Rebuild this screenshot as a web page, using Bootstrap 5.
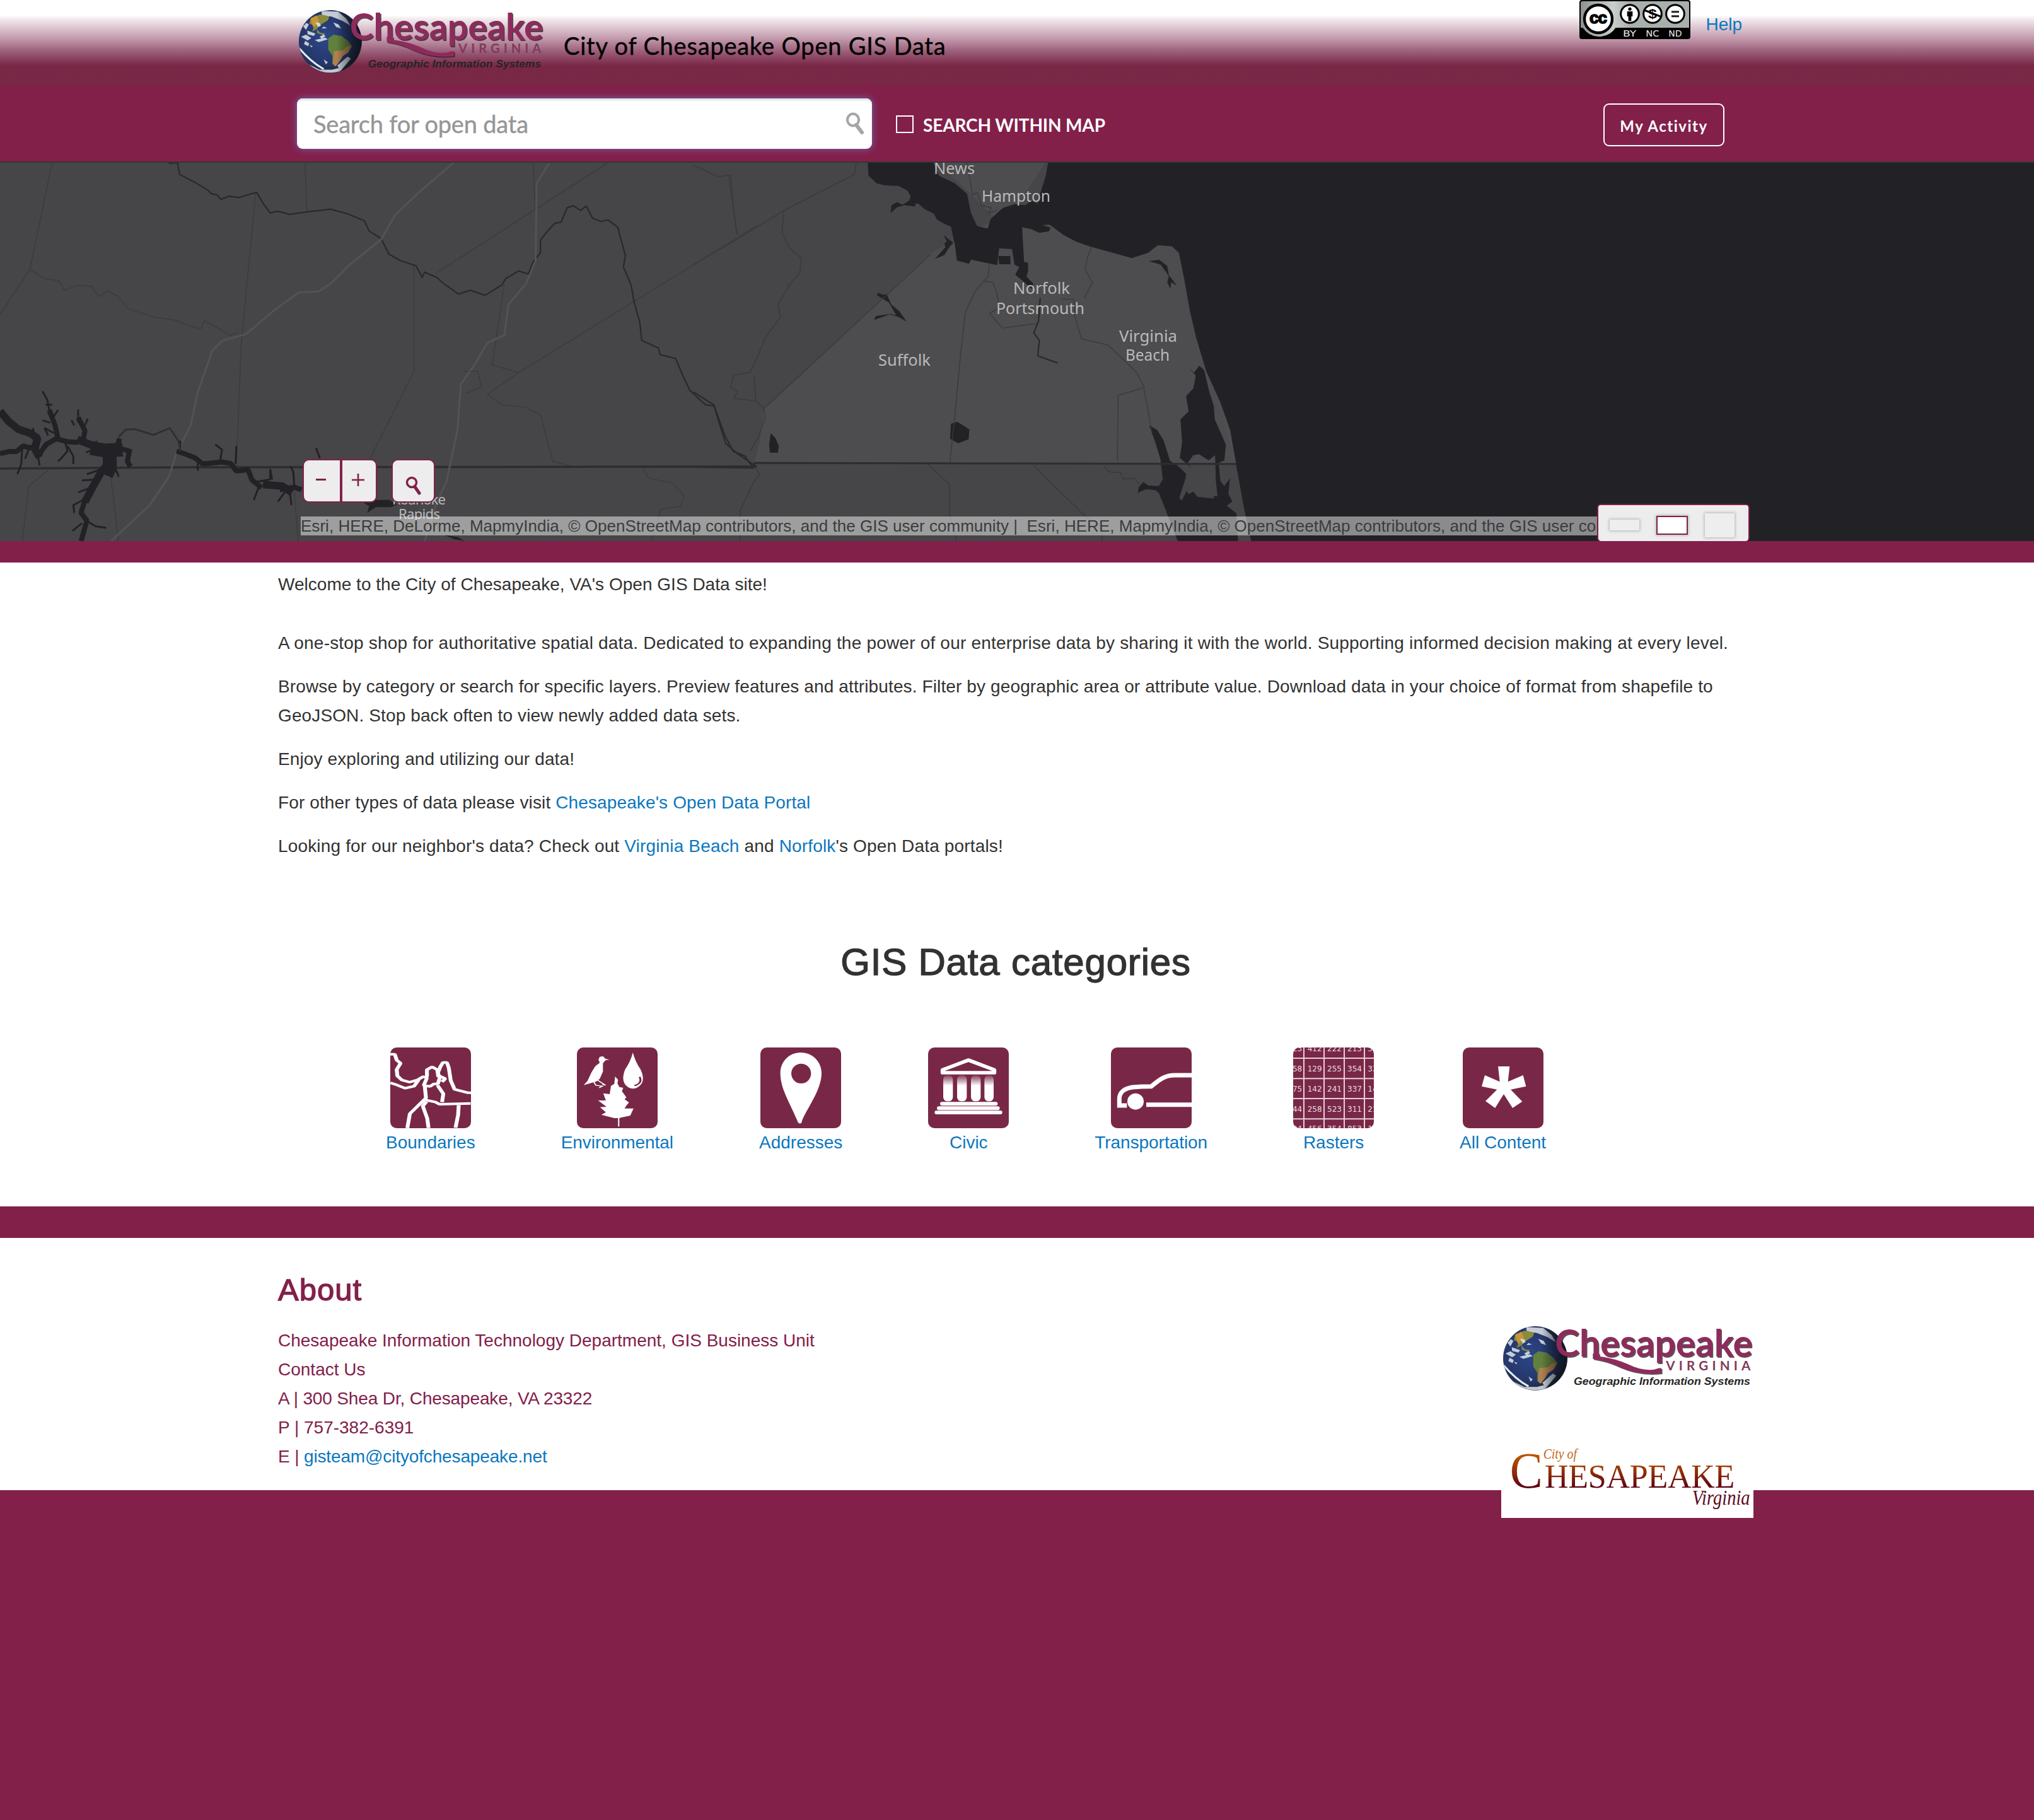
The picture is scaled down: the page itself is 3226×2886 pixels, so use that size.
<!DOCTYPE html>
<html lang="en">
<head>
<meta charset="utf-8">
<title>City of Chesapeake Open GIS Data</title>
<link href="https://cdn.jsdelivr.net/npm/bootstrap@5.3.0/dist/css/bootstrap.min.css" rel="stylesheet">
<style>
:root{--brand:#82204a;--plum:#782846;--ink:#323232;--sky:#0c77be}
body{min-height:2886px;font-family:"Liberation Sans",Arial,sans-serif;font-size:28px;line-height:46px;color:var(--ink);background:var(--brand)}
a{color:var(--sky);text-decoration:none}
p{margin-bottom:23px}
.page-wrap{width:2344px;margin:0 auto}
.site-top{height:136px;background:linear-gradient(#fff 0,#fff 24px,#f1e8ec 31px,#c49cae 60px,#9a5e79 82px,#7a2746 104px,#782846 136px)}
.top-inner{padding:0 22px 0 30px}
.site-logo{width:392px;height:101px;margin-top:16px}
.site-title{font-family:Lato,sans-serif;font-size:38px;line-height:48px;letter-spacing:.8px;color:#000;margin:48px 0 0 31px;-webkit-text-stroke:.4px}
.cc-badge{width:176px;height:62px}
.help-link{margin:16px 0 0 24px}
.search-bar{height:120px;padding:0 50px 0 30px}
.search-box{width:912px;height:80px;border-radius:9px;padding:0 12px 0 26px;background:#fff;box-shadow:0 0 12px #7366b0,inset 0 3px 3px #dfe3e3;font-family:Lato,sans-serif;font-size:38px;letter-spacing:-.2px;color:#969696;-webkit-text-stroke:.4px}
.tick{width:28px;height:28px;border:2px solid #fff;margin:2px 15px 0 38px}
.within{font-family:Lato,sans-serif;font-weight:700;font-size:28px;letter-spacing:-.15px;color:#fff;padding-top:3px}
.btn-act{font-family:Lato,sans-serif;font-weight:700;font-size:24px;letter-spacing:1.5px;width:192px;height:68px;border:2px solid #fff;border-radius:9px;color:#fff;padding:3px 0 0;margin-top:4px}
.map-pane{height:602px;background:#464648;border-top:2px solid #3a3338}
.map-pane>svg{position:absolute;left:0;top:-2px}
.ctl{position:absolute;top:470px;height:69px;background:#ededed;border:2px solid var(--brand);border-radius:10px;color:var(--brand)}
.ctl-zoom{left:480px;width:118px}
.ctl-zoom span{width:50%;padding-right:3px;padding-bottom:4px}
.ctl-zoom span+span{border-left:4px solid var(--brand)}
.ctl-find{left:621px;width:69px}
.credits{position:absolute;left:477px;top:561px;width:2060px;height:30px;line-height:31px;overflow:hidden;white-space:pre;background:rgba(255,255,255,.48);color:#3b3b3d;font-size:26px;letter-spacing:.03px}
.size-pick{position:absolute;left:2533px;top:541px;width:242px;height:60px;padding:6px 4px 0 0;gap:27px;background:#ededed;border:2px solid var(--brand);border-bottom-width:1px;border-radius:6px}
.size-pick i{display:block;box-shadow:0 0 4px 1px #b4b4b4;background:#eee;width:47px}
.size-pick .wide{height:17px}.size-pick .tall{height:38px}
.size-pick .picked{height:30px;width:50px;background:#fff;border:2px solid var(--brand)}
.band{height:34px}
.intro{padding-top:12px}
.intro p{letter-spacing:.12px}
.intro .opening{letter-spacing:.02px;margin-bottom:47px}
.intro .airy{letter-spacing:.2px}
.intro .near{letter-spacing:.16px}
.cat-title{font-size:60px;line-height:72px;font-weight:400;letter-spacing:.8px;-webkit-text-stroke:1.3px;margin:125px 0 99px;padding-right:4px;text-align:center}
.cats{padding-left:171px;gap:136px;padding-bottom:78px}
.cats a{min-width:128px;text-align:center;white-space:nowrap}
.cats a.snug{letter-spacing:-.05px}
.cats svg{display:block;margin:0 auto;width:128px;height:128px;border-radius:10px;background:var(--plum)}
.gap-band{height:50px}
.foot{height:400px;color:var(--brand)}
.about-title{font-size:49px;line-height:56px;letter-spacing:1px;-webkit-text-stroke:1.3px;margin:54px 0 30px}
.tight{letter-spacing:-.14px}
.foot-logos{width:400px;margin:140px 4px 0 0}
.foot-logos svg{display:block}
.city-logo{margin-top:75px;background:#fff}
</style>
<script src="https://cdn.jsdelivr.net/npm/bootstrap@5.3.0/dist/js/bootstrap.bundle.min.js"></script>
</head>
<body>
<svg width="0" height="0" class="position-absolute">
<defs>
<radialGradient id="sea" cx=".42" cy=".45" r=".58"><stop offset="0" stop-color="#2c4688"/><stop offset=".7" stop-color="#25376a"/><stop offset="1" stop-color="#1b2535"/></radialGradient>
<linearGradient id="shade"><stop offset=".6" stop-opacity="0"/><stop offset="1" stop-color="#10141c" stop-opacity=".85"/></linearGradient>
<linearGradient id="rust" x1="0" y1="70" x2="0" y2="235" gradientUnits="userSpaceOnUse"><stop offset="0" stop-color="#c05a00"/><stop offset=".5" stop-color="#963206"/><stop offset="1" stop-color="#5c0012"/></linearGradient>
<clipPath id="ball"><circle cx="162" cy="153" r="152"/></clipPath>
<filter id="soft"><feGaussianBlur stdDeviation="2"/></filter>
<symbol id="gis-logo" viewBox="0 0 1200 310" preserveAspectRatio="none">
<circle cx="162" cy="153" r="153" fill="url(#sea)"/>
<g clip-path="url(#ball)"><g filter="url(#soft)">
<path d="M66 42L110 22 160 24 150 50 118 70 96 92 74 104 84 76 60 66Z" fill="#8b8a3c"/><path d="M66 40l30-14 12 30-28 30z" fill="#c99537"/><path d="M96 92l16 18 26 4-10 8-30-10z" fill="#7d8a4a"/>
<path d="M152 138L176 120 216 126 246 148 268 176 250 204 222 222 208 248 186 274 172 262 172 222 152 192Z" fill="#62803e"/><path d="M180 200l44-4 22-22 18 2-14 30-28 18-14 24-20 26-14-12z" fill="#b08050"/>
<path d="M30 80l16-18 12 8-14 26zM20 130l24-10 26 16-18 12zM50 100l40 14-8 12-30-8zM86 146l50-12 14 8-44 14zM120 4l80 4 40 34 20 34-40-24-50-20-50-10zM110 130l20-12 8 10-18 12zM0 200l50 60 60 30 60 0 40-10 0 40-110 0-90-50zM196 270l50-44 16 10-50 60zM130 240l20 14-10 10zM60 170l16 4-4 8zM120 90l10-10 16 8zM40 150l20 12-6 14-20-10zM90 60l20 2 6 14-14 6zM176 60l26 10 12 20-24-8z" fill="#dfe5ea" opacity=".85"/>
<path d="M10 185q60 70 120 102" stroke="#e8eef2" stroke-width="9" fill="none"/></g>
<circle cx="162" cy="153" r="153" fill="url(#shade)"/></g>
<g font-family="Lato,sans-serif">
<g fill="#2a1a22" opacity=".75" transform="translate(5 5)"><text x="256" y="145" font-size="178" font-weight="700" textLength="940" lengthAdjust="spacingAndGlyphs">Chesapeake</text><path d="M436 130v26q70 10 130 40 90 40 196 28v-24h-12q-60 24-150-20-60-26-134-36v-14z"/></g>
<text x="256" y="145" font-size="178" font-weight="700" fill="#8d2c5c" textLength="940" lengthAdjust="spacingAndGlyphs">Chesapeake</text>
<path d="M436 130v26q70 10 130 40 90 40 196 28v-24h-12q-60 24-150-20-60-26-134-36v-14z" fill="#8d2c5c"/>
<text x="784" y="210" font-size="62" font-weight="700" fill="#7f3a58" textLength="402" lengthAdjust="spacing">VIRGINIA</text></g>
<text x="345" y="280" font-family="Liberation Sans,sans-serif" font-size="52" font-weight="700" font-style="italic" fill="#252525" textLength="840" lengthAdjust="spacingAndGlyphs">Geographic Information Systems</text>
</symbol>
</defs>
</svg>

<header class="site-top">
<div class="page-wrap top-inner d-flex align-items-start">
<svg class="site-logo"><use href="#gis-logo"/></svg>
<div class="site-title">City of Chesapeake Open GIS Data</div>
<svg class="cc-badge ms-auto" viewBox="0 0 528 186">
<defs><linearGradient id="cg"><stop offset="0" stop-color="#8d928e"/><stop offset=".3" stop-color="#c9cfcb"/><stop offset=".45" stop-color="#a9afab"/><stop offset="1" stop-color="#a9b0ab"/></linearGradient></defs>
<rect width="528" height="186" rx="12" fill="#000"/><path d="M6 14q0-8 10-8h496q10 0 10 8v118H172q-26 42-82 42-46-2-74-42H6z" fill="url(#cg)"/>
<circle cx="90" cy="90" r="66" fill="#fff" stroke="#000" stroke-width="13"/>
<g stroke="#000" stroke-width="9" fill="#fff"><circle cx="240" cy="66" r="43"/><circle cx="348" cy="66" r="43"/><circle cx="456" cy="66" r="43"/></g>
<text x="48" y="110" font-family="Liberation Sans" font-size="78" font-weight="700" textLength="84" stroke="#000" stroke-width="5">cc</text>
<circle cx="240" cy="43" r="8"/><path d="M227 54h26v24h-6v22h-14V78h-6z"/>
<text x="327" y="88" font-family="Liberation Sans" font-size="62" font-weight="700" textLength="42" lengthAdjust="spacingAndGlyphs">$</text><path d="M308 48L390 80" stroke="#000" stroke-width="9"/>
<path d="M438 56h36M438 77h36" stroke="#222" stroke-width="9"/>
<g fill="#e8e8e8" font-family="DejaVu Sans" font-size="40"><text x="207" y="174" textLength="64" lengthAdjust="spacingAndGlyphs">BY</text><text x="316" y="174" textLength="64" lengthAdjust="spacingAndGlyphs">NC</text><text x="424" y="174" textLength="64" lengthAdjust="spacingAndGlyphs">ND</text></g>
</svg>
<a href="#" class="help-link">Help</a>
</div>
</header>

<div class="page-wrap search-bar d-flex align-items-center">
<div class="search-box d-flex align-items-center justify-content-between"><span>Search for open data</span>
<svg width="30" height="36" viewBox="0 0 30 36" fill="none" stroke="#a6a6a6"><ellipse cx="12" cy="12" rx="9" ry="9.5" stroke-width="4"/><path d="M17 20l9 12" stroke-width="6" stroke-linecap="round"/></svg></div>
<div class="tick"></div><div class="within">SEARCH WITHIN MAP</div>
<button class="btn btn-act ms-auto">My Activity</button>
</div>

<main>
<section class="map-pane position-relative overflow-hidden">
<svg width="3226" height="602" viewBox="0 0 3226 602" fill="none">
<g transform="translate(1100 -6) scale(.63776 .40816)">
<path fill="#49494b" d="M-80 920L0 915 140 1170 150 1188H1350V0H0Z" opacity=".25"/>
<path fill="#4d4d4f" d="M175 975L590 370 800 200 882 0H595L760 250 1250 300 1400 1188H150L165 1100Z"/>
<path fill="#222226" d="M433 15L435 70 455 100 475 107 510 110 532 128 540 150 536 168 560 180 575 200 598 218 605 240 625 258 640 268 650 340 655 400 685 412 690 396 755 418 760 352 792 355 798 415 810 425 800 455 818 478 842 510 845 490 828 462 832 440 832 408 822 405 817 270 840 278 860 292 884 286 888 272 868 262 885 260 920 300 950 325 985 345 1090 390 1130 370 1155 340 1190 345 1207 370 1220 470 1235 600 1250 700 1275 830 1310 950 1335 1060 1350 1200 1370 1370 1388 1500H3400V15H882L876 70 862 140 856 178 840 168 825 185 800 180 770 195 755 215 738 240 732 275 720 272 705 265 690 215 680 140 650 100 610 70 595 15Z"/>
<path fill="#222226" d="M490 215l2-30 14-12 14 10 18-18 16 10-4 14 -26-4-18 8zM622 300l10 14 14 16-10 18-12 30-24 16 8-14 18-32-2-16 6-6zM758 382h30v32h-28zM1132 402l26-5 20 24 4 35 20 42-14-14-2 26-8-26 4-24-20-44zM458 525l14 8 8-4 12 42 20 26 18 40-20-18-22-10-40 22 6-16 36-8 14 6-18-50-30-28zM192 1070l12 20 8 30-2 26-20 0-2-30zM640 1034l16-8 30 30-2 38-26 16-20-18z"/>
<path fill="#222226" d="M1236 822l8 14 14-28 12 18 12 80 12 60 2 50 14 50 14 50-4 60-14 10 4 70 10 20 14-30-4 60 10 30-14 16 24 30 4 110H1205l-16-60-14-60-18-70-8-10-24-4-20 14 2-22 12-20 12 14 26 2 10-26-6-80-14-70-14-60 20 18 16 40 16 80 20 20 20 30-4 50 10 30 18-16 10 14 44 10-4-60-2-100-16 20-24-24-14 4-14 30 10 20-30-40 6-60-4-90 20-30-6-60 18-30 6-50-12-20z"/>
<path fill="#464648" d="M1255 1200l35-6 4 130-40-6-22-40-18 54-6-10 14-70z"/>
<path d="M1307 960l14 60 16 90 10 80" stroke="#505052" stroke-width="3" vector-effect="non-scaling-stroke"/>
<g stroke="#38383b" stroke-width="1.6" opacity=".8">
<path vector-effect="non-scaling-stroke" d="M0 415L110 315 225 205 400 65 405 15"/>
<path vector-effect="non-scaling-stroke" d="M0 30L30 50 60 74 92 68 98 180 108 300M225 205L220 290 238 350 268 390 264 450 240 490 210 570 216 620 178 700 160 770 140 835 100 845 92 890 110 910 100 935 155 945 150 845M155 945L175 975 178 1010 160 1090 140 1140"/>
<path vector-effect="non-scaling-stroke" d="M175 975L590 375M735 415L733 460 700 520 676 600 665 750 648 1030 637 1188M720 480l24 4 10 40 6 60-24 20 32 58 88-18M990 345l-10 40-6 50 18 50-20 60M945 600l20 104 66 24 70 105 20 60-65 30-2 255M1120 900l10 80 10 90M915 550h30l4 50M680 15l14 130 12-10 10 50 24 10-6 20 20-10"/>
<path vector-effect="non-scaling-stroke" d="M582 1190l55 80v120l20 110M845 1195L975 1395 1016 1430V1500M1022 1200l10 20 30 4 6 24 28-2 14 24M116 1500V1370l34-110 14-30-16-40"/>
</g>
<path vector-effect="non-scaling-stroke" d="M0 1202L148 1205 152 1186 1350 1190" stroke="#2d2d30" stroke-width="3"/>
<path vector-effect="non-scaling-stroke" d="M862 545l-4 90-12 45 14 30-4 60 50 28M0 910l20 20 30 30 14 60 14 60 20 60 30 20 8 20 14 25" stroke="#29292c" stroke-width="2.2"/>
</g>
<g transform="translate(0 -6) scale(.76531 .40816)">
<g stroke="#3a3a3d" stroke-width="1.6" opacity=".8">
<path vector-effect="non-scaling-stroke" d="M108 20L62 435 0 610M62 435l30 35 30 8 12 38 24-20 32 4 14 40 18-22 20 18 24 50 30 20 24 14 40 10 40 28 16 6 8-30 30 30 22 26 18-10M530 135L500 720 490 1200M632 20l4 186M858 420v410l-94 350M1105 20l4 180M1258 22L903 450M1568 265L1075 835 1020 805 1045 490M1075 835l-65 85 30 40 50 10 30 30 16 110 10 70 40 20M1510 70l18 230M960 830l30 0 8 60-30 25M228 1215l18 275M100 1215l-40 60-14 215M606 1210l12 280M1330 1195l14 50 50 20 24 50-8 40-40 10-20 125"/></g>
<path vector-effect="non-scaling-stroke" d="M350 22L368 20 372 65 405 97 430 125 438 140 450 145 458 162 475 150 495 155 512 145 532 135 546 180 560 215 575 208 600 220 640 210 685 200 720 218 755 245 765 285 790 315 806 375 830 400 862 420 875 465 880 445 905 465 920 490 950 530 975 515 1005 535 1040 495 1048 470 1075 440 1095 452 1105 405 1120 370 1120 320 1135 285 1150 255 1163 250 1175 195 1188 187 1203 205 1215 188 1228 235 1245 248 1260 242 1280 270 1296 380 1292 425 1308 495 1314 560 1326 640 1330 710 1365 740 1368 765 1400 780 1416 850 1430 905 1462 960 1480 965 1492 1040 1504 1110 1528 1150 1568 1200" stroke="#29292c" stroke-width="2.2"/>
<path vector-effect="non-scaling-stroke" d="M0 1208L400 1203 1568 1200" stroke="#2d2d30" stroke-width="3.5"/>
<g stroke="#535355" stroke-width="3">
<path vector-effect="non-scaling-stroke" d="M940 20L865 140 818 225 790 318 725 415 685 490 660 520 620 523 570 590 510 685 460 712 440 750 410 910 395 1040 365 1150 350 1240 310 1350 230 1490M1138 22L1112 100 1110 400 1090 490 1054 570 1045 690 1010 720 985 800 955 880 948 1060 925 1260 905 1340 880 1490"/></g>
<g stroke="#222226" stroke-linejoin="bevel">
<path vector-effect="non-scaling-stroke" stroke-width="12" d="M0 985L18 1025 38 1055 62 1070 78 1090 72 1130 82 1165M160 1095l30 22 30 30 4 40-16 40-18 60-14 50M545 1270l40 6 20 25"/>
<path vector-effect="non-scaling-stroke" stroke-width="22" d="M188 1128l30 10 36-4M226 1120l2 80-8 34"/>
<path vector-effect="non-scaling-stroke" stroke-width="8" d="M0 1150l18-8 16 0 14-22 14 8 18-14M82 1150l14-36 20-22 24 12 22 2M176 1330l-8 50 12 30-12 80M242 1125l6-34M250 1130l18 10-4 40 6 20M120 1090l-6-50-12-60M172 1100l4-40-14-50M366 1140l16 10 22 16 16 24 40-8 18 6 12 30 24-6 8 40 20 30M555 1270l16 6M580 1290l30-10 15 10"/>
<path vector-effect="non-scaling-stroke" stroke-width="3" d="M102 980l-4-40-10-32M94 960l14 0M110 1010l10-30M104 1030l-16-10M162 1030l0-52M154 1040l-6-20M176 1040l6-26M100 1080l-8-30M72 1080l-4-30M112 1070l-20-20M78 1150l4 46M46 1130l-2 60-8 40M60 1130l-8 40M134 1100l6 40-14 30 -6 10M140 1120l12 40 0 30M200 1100l-4 30-18 16M260 1140l14-4M262 1180l10 16M236 1190l10 50M210 1210l-30 20M200 1250l-30 4M192 1280l-30 20M182 1320l-30 30 2 30M178 1410l20 22 22 6M170 1420l-20 30M372 1150l2-50M456 1184l4-50-14-20M488 1190l2-70M530 1260l30-10 0-40M610 1280l-2-60-6-20M536 1280l-10 50M600 1290l4 60M590 1300l-14 36M560 1210l4 40M410 1180l0 36M655 1128l8 40"/></g>
<path stroke="#303034" stroke-width="3" vector-effect="non-scaling-stroke" d="M246 1085l14-28 20-2 38 22 34-26 18 50 4 40"/>
<path fill="#222226" d="M745 1330h62l16 18-14 10-30 0-18 22 4-26zM920 1465l30 10 12 14-20-6z"/>
</g>
<g fill="#b9b9ba" font-family="Noto Sans,Open Sans,sans-serif" font-size="26">
<text x="1481" y="20" textLength="65" lengthAdjust="spacingAndGlyphs">News</text><text x="1557" y="64" textLength="109" lengthAdjust="spacingAndGlyphs">Hampton</text><text x="1607" y="210" textLength="90" lengthAdjust="spacingAndGlyphs">Norfolk</text><text x="1580" y="242" textLength="140" lengthAdjust="spacingAndGlyphs">Portsmouth</text><text x="1775" y="286" textLength="92" lengthAdjust="spacingAndGlyphs">Virginia</text><text x="1785" y="316" textLength="70" lengthAdjust="spacingAndGlyphs">Beach</text><text x="1393" y="324" textLength="83" lengthAdjust="spacingAndGlyphs">Suffolk</text>
<g font-size="22"><text x="622" y="544" textLength="85">Roanoke</text><text x="632" y="567" textLength="66">Rapids</text></g></g>
</svg>
<div class="ctl ctl-zoom d-flex"><span class="d-flex align-items-center justify-content-center"><svg width="16" height="4"><rect width="16" height="3" fill="#82204a"/></svg></span><span class="d-flex align-items-center justify-content-center"><svg width="20" height="20" stroke="#82204a" stroke-width="2.6"><path d="M10 0v20M0 10h20"/></svg></span></div>
<div class="ctl ctl-find d-flex justify-content-center"><svg class="mt-4" width="26" height="32" fill="none" stroke="#82204a"><circle cx="10" cy="11" r="7.5" stroke-width="3.4"/><path d="M15 18l7 10" stroke-width="5" stroke-linecap="round"/></svg></div>
<div class="credits">Esri, HERE, DeLorme, MapmyIndia, © OpenStreetMap contributors, and the GIS user community |&nbsp; Esri, HERE, MapmyIndia, © OpenStreetMap contributors, and the GIS user community</div>
<div class="size-pick d-flex align-items-center justify-content-center"><i class="wide"></i><i class="picked"></i><i class="tall"></i></div>
</section>
<div class="band"></div>

<section class="bg-white">
<div class="page-wrap intro">
<p class="opening">Welcome to the City of Chesapeake, VA's Open GIS Data site!</p>
<p class="airy">A one-stop shop for authoritative spatial data. Dedicated to expanding the power of our enterprise data by sharing it with the world. Supporting informed decision making at every level.</p>
<p>Browse by category or search for specific layers. Preview features and attributes. Filter by geographic area or attribute value. Download data in your choice of format from shapefile to<br>GeoJSON. Stop back often to view newly added data sets.</p>
<p>Enjoy exploring and utilizing our data!</p>
<p>For other types of data please visit <a href="#">Chesapeake's Open Data Portal</a></p>
<p class="near">Looking for our neighbor's data? Check out <a href="#">Virginia Beach</a> and <a href="#">Norfolk</a>'s Open Data portals!</p>
<h2 class="cat-title">GIS Data categories</h2>
<div class="cats d-flex">
<a href="#"><svg viewBox="0 0 384 384"><g transform="scale(1.53 1) translate(-77 -60)" fill="none" stroke="#fff" stroke-width="12" stroke-linejoin="bevel"><path d="M77 92h14l6 28 12 15-12 30 2 30 14 20 24 10 24-10 18-16 12 6-10 36 20 4 12-12 12 0 6-30-6-22 8-30 8-20 12 0 6 26 6 60 12 42 40 16 14 0M77 228l20 10 26 16 28-10 14-30M191 200l0-34 16-14 16 14 4 34M222 190l26 18-10 16M184 240l4 60-20 30-30 45-8 68M190 318l-12 20 14 60 4 45M188 310l30 10 12 10 97-4M224 240l18 40-4 40M290 330l-2 50-8 62"/></g></svg><span>Boundaries</span></a>
<a href="#" class="snug"><svg viewBox="0 0 384 384"><g transform="scale(1.53 1) translate(-657 -60)" fill="#fff"><path d="M724 118l4-14 10-2 8 12 12 4-12 3-8 14 0 40-10 34-10 12-40 18 12-20 12-40 12-30 14-16z"/><path d="M708 220l8 20 20 4-10 8M722 216l24 24-10-4" fill="none" stroke="#fff" stroke-width="4"/><path d="M831 84q8 46 24 80 18 60-8 84-14 14-30 2-26-24-10-86 16-34 24-80z"/><path d="M852 200q10 30-16 42" stroke="#782846" stroke-width="6" fill="none"/><path d="M776 198l9 16-2 16 6 18 12 4-4 16 14 30-6 8 14 16-8 14-6 14 28 0-10 34-30 10-4 2v40h-4v-40l-12 0-40-16 14-12-18-24 20-2-26-30 24 0-8-34 20 4 4-40 10-8z"/></g></svg><span>Environmental</span></a>
<a href="#"><svg viewBox="0 0 384 384"><path fill="#fff" fill-rule="evenodd" d="M192 24c-56 0-97 44-97 98 0 74 44 138 80 224 5 18 12 16 20 14 10-50 96-150 96-238 0-54-43-98-99-98zm2 53a47 47 0 110 94 47 47 0 010-94z"/></svg><span>Addresses</span></a>
<a href="#"><svg viewBox="0 0 384 384"><defs><linearGradient id="col" x2="0" y2="1"><stop offset="0" stop-color="#fff" stop-opacity=".1"/><stop offset=".4" stop-color="#fff"/></linearGradient></defs><path d="M68 120V107L192 60l124 47v13z" fill="none" stroke="#fff" stroke-width="17" stroke-linejoin="round"/><g fill="url(#col)"><rect x="72" y="132" width="46" height="124" rx="20"/><rect x="138" y="132" width="46" height="124" rx="20"/><rect x="204" y="132" width="46" height="124" rx="20"/><rect x="268" y="132" width="44" height="124" rx="20"/></g><path d="M66 268h256M51 289h281M40 309h304" stroke="#fff" stroke-width="18" stroke-linecap="round"/></svg><span>Civic</span></a>
<a href="#" class="snug"><svg viewBox="0 0 384 384"><g fill="none" stroke="#fff"><path d="M76 276H40v-32c0-30 24-50 64-55 30-3 60-4 88-4 36-30 62-53 112-53h84" stroke-width="21"/><path d="M168 272h220" stroke-width="21"/></g><circle cx="117" cy="257" r="39" fill="#fff"/></svg><span>Transportation</span></a>
<a href="#"><svg viewBox="0 0 384 384"><path d="M51 0v384M147 0v384M243 0v384M339 0v384M0 51h384M0 148h384M0 243h384M0 340h384" stroke="#e9cdd9" stroke-width="6"/><g font-family="DejaVu Sans" font-size="36" fill="#ecdce3"><text x="-26" y="18">123</text><text x="68" y="18">412</text><text x="162" y="18">222</text><text x="258" y="18">213</text><text x="355" y="18">301</text><text x="-26" y="113">158</text><text x="68" y="113">129</text><text x="162" y="113">255</text><text x="258" y="113">354</text><text x="355" y="113">331</text><text x="-26" y="209">175</text><text x="68" y="209">142</text><text x="162" y="209">241</text><text x="258" y="209">337</text><text x="355" y="209">148</text><text x="-26" y="305">244</text><text x="68" y="305">258</text><text x="162" y="305">523</text><text x="258" y="305">311</text><text x="355" y="305">213</text><text x="-26" y="398">124</text><text x="68" y="398">456</text><text x="162" y="398">354</text><text x="258" y="398">853</text><text x="355" y="398">112</text></g></svg><span>Rasters</span></a>
<a href="#"><svg viewBox="0 0 384 384"><path fill="#fff" d="M168 90h55l-8 73 72-31 14 53-73 15 55 57-46 31-42-66-41 66-46-33 55-55-73-15 15-53 71 31z"/></svg><span>All Content</span></a>
</div>
</div>
</section>
<div class="gap-band"></div>
</main>

<footer class="foot bg-white">
<div class="page-wrap d-flex justify-content-between align-items-start">
<div><h3 class="about-title">About</h3>
<div>Chesapeake Information Technology Department, GIS Business Unit</div><div>Contact Us</div><div class="tight">A | 300 Shea Dr, Chesapeake, VA 23322</div><div>P | 757-382-6391</div><div class="tight">E | <a href="#">gisteam@cityofchesapeake.net</a></div></div>
<div class="foot-logos"><svg width="400" height="103"><use href="#gis-logo"/></svg>
<svg class="city-logo" width="400" height="126" viewBox="0 0 1200 378"><g font-family="Liberation Serif,serif" fill="url(#rust)"><text x="41" y="233" font-size="240" textLength="156" lengthAdjust="spacingAndGlyphs">C</text><text x="207" y="234" font-size="156" textLength="904" lengthAdjust="spacing">HESAPEAKE</text></g><g font-family="Liberation Serif,serif" font-style="italic"><text x="200" y="95" font-size="72" fill="#c06a1a" textLength="160" lengthAdjust="spacingAndGlyphs">City of</text><text x="908" y="315" font-size="98" fill="#5c0a20" textLength="276" lengthAdjust="spacingAndGlyphs">Virginia</text></g></svg></div>
</div>
</footer>
</body>
</html>
